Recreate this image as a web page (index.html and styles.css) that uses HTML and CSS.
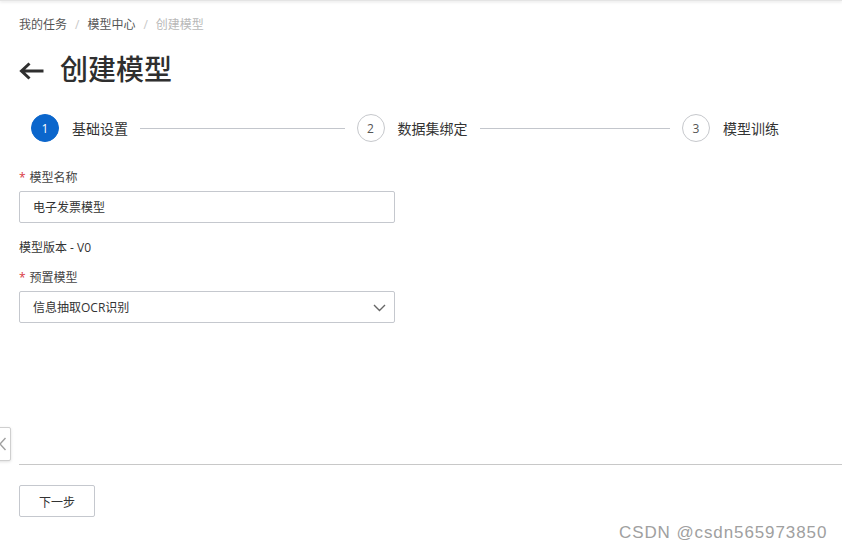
FILE: index.html
```html
<!DOCTYPE html>
<html lang="zh-CN">
<head>
<meta charset="utf-8">
<title>创建模型</title>
<link rel="stylesheet" href="styles.css">
</head>
<body>
<div class="topbar"></div>
<main class="page">
  <nav class="breadcrumb">
    <span class="crumb">我的任务</span>
    <span class="sep">/</span>
    <span class="crumb">模型中心</span>
    <span class="sep">/</span>
    <span class="crumb current">创建模型</span>
  </nav>

  <header class="title-row">
    <svg class="back" width="25" height="18" viewBox="0 0 25 18">
      <path d="M2.5 9 H24.5 M10.5 1.5 L2.5 9 L10.5 16.5" fill="none" stroke="#2f2f2f" stroke-width="3" stroke-linecap="butt" stroke-linejoin="miter"/>
    </svg>
    <h1 class="title">创建模型</h1>
  </header>

  <div class="steps">
    <div class="step active">
      <span class="step-num">1</span>
      <span class="step-label">基础设置</span>
      <span class="step-line"></span>
    </div>
    <div class="step">
      <span class="step-num">2</span>
      <span class="step-label">数据集绑定</span>
      <span class="step-line"></span>
    </div>
    <div class="step last">
      <span class="step-num">3</span>
      <span class="step-label">模型训练</span>
    </div>
  </div>

  <form class="form">
    <label class="field-label"><span class="req">*</span>模型名称</label>
    <div class="input">电子发票模型</div>

    <div class="version">模型版本 - V0</div>

    <label class="field-label label2"><span class="req">*</span>预置模型</label>
    <div class="input select">
      <span>信息抽取OCR识别</span>
      <svg class="chev" width="13" height="8" viewBox="0 0 13 8">
        <path d="M1 1 L6.5 6.5 L12 1" fill="none" stroke="#666" stroke-width="1.4"/>
      </svg>
    </div>
  </form>

  <div class="divider"></div>
  <div class="actions">
    <button class="btn" type="button">下一步</button>
  </div>
</main>

<div class="side-tab">
  <svg width="8" height="14" viewBox="0 0 8 14"><path d="M6.5 1 L1 7 L6.5 13" fill="none" stroke="#a0a0a0" stroke-width="1.4"/></svg>
</div>

<div class="watermark">CSDN @csdn565973850</div>
</body>
</html>
```

FILE: styles.css
```css
html, body {
  margin: 0;
  padding: 0;
  background: #fff;
}
body {
  font-family: "Open Sans", "Noto Sans CJK SC", sans-serif;
  color: #333;
  width: 842px;
  height: 551px;
  overflow: hidden;
  position: relative;
}
.topbar {
  height: 1px;
  background: #e4e4e4;
  box-shadow: 0 1px 3px rgba(0, 0, 0, 0.18);
}
.page {
  padding-left: 19px;
}
.breadcrumb {
  margin-top: 14px;
  height: 20px;
  line-height: 20px;
  font-size: 12px;
  display: flex;
  align-items: center;
}
.crumb {
  color: #555;
}
.crumb.current {
  color: #b8b8b8;
}
.sep {
  color: #c8c8c8;
  margin: 0 8px;
}
.title-row {
  margin-top: 15px;
  height: 36px;
  display: flex;
  align-items: center;
}
.back {
  margin-top: 6px;
}
.title {
  margin: 0 0 0 16px;
  font-size: 28px;
  font-weight: 500;
  line-height: 36px;
  color: #2f2f2f;
  font-family: "Noto Sans CJK SC", sans-serif;
}
.steps {
  margin-top: 28px;
  margin-left: 12px;
  width: 748px;
  height: 28px;
  display: flex;
  align-items: center;
}
.step {
  flex: 1;
  display: flex;
  align-items: center;
}
.step.last {
  flex: none;
}
.step-num {
  width: 26px;
  height: 26px;
  border: 1px solid #c6c8cc;
  border-radius: 50%;
  display: flex;
  align-items: center;
  justify-content: center;
  font-size: 12px;
  color: #555;
  flex: none;
}
.step.active .step-num {
  background: #0b66cc;
  border-color: #0b66cc;
  color: #fff;
}
.step-label {
  margin-left: 13px;
  font-size: 14px;
  color: #333;
  white-space: nowrap;
}
.step-line {
  flex: 1;
  height: 1px;
  background: #c3c6cc;
  margin: 0 12px;
}
.form {
  margin: 0;
}
.field-label {
  display: block;
  margin-top: 27px;
  line-height: 18px;
  font-size: 12px;
  color: #444;
}
.req {
  color: #d9363e;
  margin-right: 4px;
}
.label2 {
  margin-top: 12px;
}
.input {
  box-sizing: border-box;
  margin-top: 4px;
  width: 376px;
  height: 32px;
  border: 1px solid #c5c8ce;
  border-radius: 2px;
  padding: 0 13px;
  display: flex;
  align-items: center;
  font-size: 12px;
  color: #333;
}
.select {
  justify-content: space-between;
  padding-right: 8px;
}
.chev {
  margin-top: 1px;
}
.version {
  margin-top: 16px;
  line-height: 18px;
  font-size: 12px;
  color: #333;
}
.divider {
  margin-top: 141px;
  height: 1px;
  background: #c8c8c8;
}
.actions {
  margin-top: 20px;
}
.btn {
  box-sizing: border-box;
  width: 76px;
  height: 32px;
  border: 1px solid #c5c8ce;
  border-radius: 2px;
  background: #fff;
  font-family: "Noto Sans CJK SC", sans-serif;
  font-size: 12px;
  color: #333;
  padding: 0;
}
.side-tab {
  position: absolute;
  left: -10px;
  top: 427px;
  width: 21px;
  height: 34px;
  border: 1px solid #cfcfcf;
  border-radius: 0 2px 2px 0;
  background: #fff;
  box-shadow: 0 1px 3px rgba(0, 0, 0, 0.12);
  display: flex;
  align-items: center;
  justify-content: flex-end;
  padding-right: 3px;
  box-sizing: border-box;
}
.watermark {
  position: absolute;
  left: 619px;
  top: 523px;
  font-family: "Liberation Sans", Arial, sans-serif;
  font-size: 17px;
  letter-spacing: 0.9px;
  color: #a0a0a0;
  text-shadow: 0 0 1px #fff;
}
```
